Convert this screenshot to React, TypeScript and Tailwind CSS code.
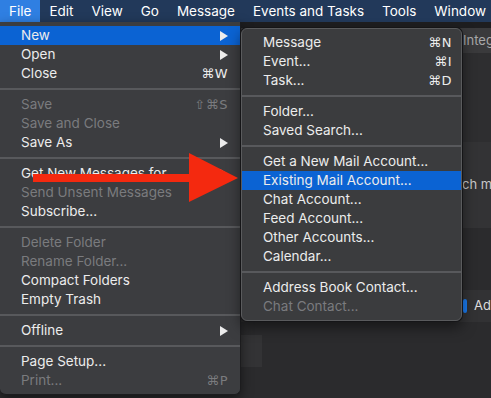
import React from "react";

const font = { fontFamily: "Inter, 'DejaVu Sans', sans-serif" };

type Item =
  | { sep: true }
  | { label: string; sc?: string; sub?: boolean; dis?: boolean; hi?: boolean };

const fileItems: Item[] = [
  { label: "New", sub: true, hi: true },
  { label: "Open", sub: true },
  { label: "Close", sc: "⌘W" },
  { sep: true },
  { label: "Save", sc: "⇧⌘S", dis: true },
  { label: "Save and Close", dis: true },
  { label: "Save As", sub: true },
  { sep: true },
  { label: "Get New Messages for", sub: true },
  { label: "Send Unsent Messages", dis: true },
  { label: "Subscribe..." },
  { sep: true },
  { label: "Delete Folder", dis: true },
  { label: "Rename Folder...", dis: true },
  { label: "Compact Folders" },
  { label: "Empty Trash" },
  { sep: true },
  { label: "Offline", sub: true },
  { sep: true },
  { label: "Page Setup..." },
  { label: "Print...", sc: "⌘P", dis: true },
];

const newItems: Item[] = [
  { label: "Message", sc: "⌘N" },
  { label: "Event...", sc: "⌘I" },
  { label: "Task...", sc: "⌘D" },
  { sep: true },
  { label: "Folder..." },
  { label: "Saved Search..." },
  { sep: true },
  { label: "Get a New Mail Account..." },
  { label: "Existing Mail Account...", hi: true },
  { label: "Chat Account..." },
  { label: "Feed Account..." },
  { label: "Other Accounts..." },
  { label: "Calendar..." },
  { sep: true },
  { label: "Address Book Contact..." },
  { label: "Chat Contact...", dis: true },
];

function Chevron() {
  return (
    <svg width="8" height="10" viewBox="0 0 8 10">
      <polygon points="0,0 8,5 0,10" fill="#ececec" />
    </svg>
  );
}

function MenuList({ items, pr }: { items: Item[]; pr: string }) {
  return (
    <>
      {items.map((it, i) =>
        "sep" in it ? (
          <div key={i} className="h-[12px] flex items-center">
            <div className="h-[2px] w-full bg-[#58595c]" />
          </div>
        ) : (
          <div
            key={i}
            className={`h-[19px] flex items-center justify-between pl-[21px] ${pr} text-[13.5px] leading-none ${
              it.hi ? "bg-[#0b63d3]" : ""
            } ${it.dis ? "text-[#7a7b7e]" : "text-[#ececec]"}`}
          >
            <span>{it.label}</span>
            {it.sc ? (
              <span className="tracking-[0.5px]" style={{ fontFamily: "'DejaVu Sans', sans-serif", fontSize: 13 }}>
                {it.sc}
              </span>
            ) : it.sub ? (
              <Chevron />
            ) : null}
          </div>
        )
      )}
    </>
  );
}

export default function App() {
  const bar = ["File", "Edit", "View", "Go", "Message", "Events and Tasks", "Tools", "Window"];
  return (
    <div className="relative w-[491px] h-[398px] overflow-hidden bg-[#2b2b2d]" style={font}>
      {/* menu bar */}
      <div className="h-[22px] flex items-stretch bg-[#22395a] text-[13.5px] text-white whitespace-nowrap">
        {bar.map((b, i) => (
          <div
            key={b}
            className={`flex items-center px-[9px] ${i === 0 ? "bg-[#2f7fe2]" : ""}`}
          >
            {b}
          </div>
        ))}
      </div>

      {/* background window content */}
      <div className="flex flex-col text-[13px] text-[#a8a8aa] whitespace-nowrap">
        <div className="h-[6px] bg-[#1e1e20]" />
        <div className="h-[25px] bg-[#3a3a3c] flex items-center pl-[463px]">Integr</div>
        <div className="h-[89px] bg-[#2e2e30]" />
        <div className="h-[86px] bg-[#333335] flex items-center pl-[462px] text-[#c8c8ca]">
          ch me
        </div>
        <div className="h-[62px] bg-[#2b2b2d]" />
        <div className="h-[32px] bg-[#323234] flex items-center pl-[463px] gap-[7px] text-[#dcdcdc]">
          <div className="w-[7px] h-[14px] border-[2px] border-[#1a7bf0] rounded-[2px]" />
          <span>Ad</span>
        </div>
        <div className="h-[13px]" />
        <div className="h-[32px] pl-[241px]">
          <div className="w-[21px] h-full bg-[#333335]" />
        </div>
      </div>

      {/* File menu */}
      <div className="absolute left-0 top-[22px] w-[241px] pt-[4px] pb-[4px] bg-[#3c3d40] rounded-b-[6px] border-r border-b border-[#1c1c1e] shadow-[0_4px_12px_rgba(0,0,0,0.5)] whitespace-nowrap">
        <MenuList items={fileItems} pr="pr-[12px]" />
      </div>

      {/* New submenu */}
      <div className="absolute left-[241px] top-[28px] w-[221px] pt-[4px] pb-[4px] bg-[#3b3c3e] rounded-[6px] border border-[#5a5b5d] shadow-[0_0_0_1px_#151517,0_6px_14px_rgba(0,0,0,0.5)] whitespace-nowrap">
        <MenuList items={newItems} pr="pr-[9px]" />
      </div>

      {/* red arrow annotation */}
      <svg className="absolute left-0 top-0" width="491" height="398" viewBox="0 0 491 398">
        <polygon
          points="33,174 189,174 189,153 238,178 189,202 189,182 33,182"
          fill="#f4290f"
        />
      </svg>
    </div>
  );
}
